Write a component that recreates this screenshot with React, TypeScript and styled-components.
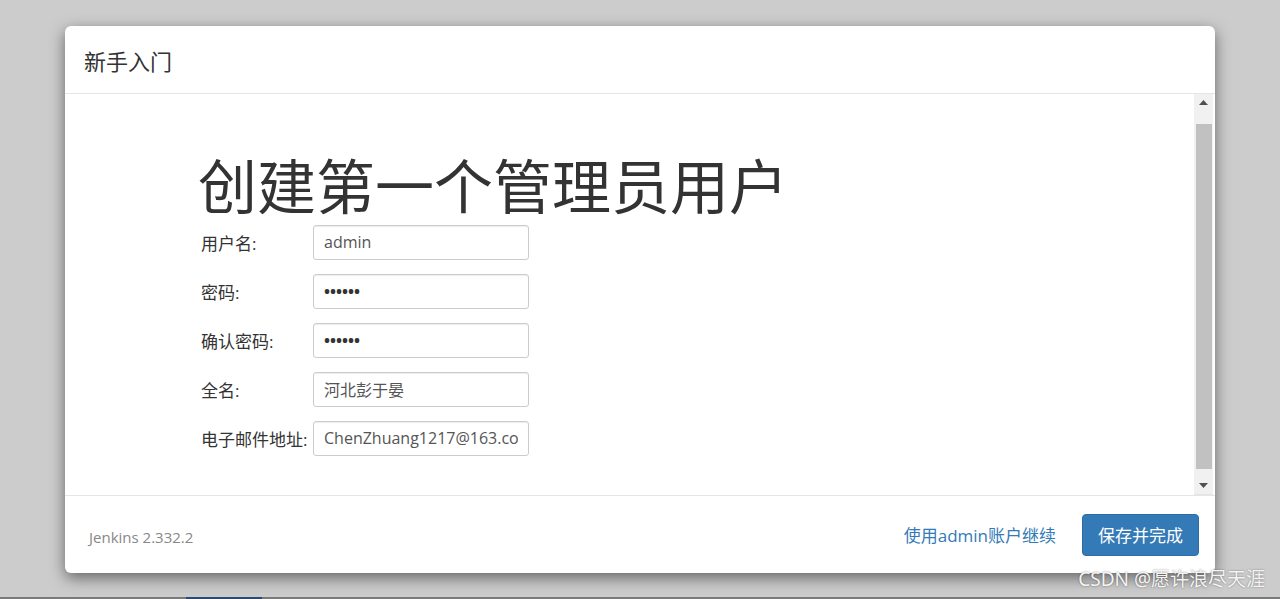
import { Fragment } from 'react';
import styled, { createGlobalStyle } from 'styled-components';

const GlobalStyle = createGlobalStyle`
  html, body {
    margin: 0;
    padding: 0;
    background: #cccccc;
  }
  * {
    box-sizing: border-box;
  }
`;

const FONT = `"Open Sans", "Noto Sans CJK SC", sans-serif`;

const Page = styled.div`
  position: relative;
  height: 599px;
  display: flex;
  flex-direction: column;
  font-family: ${FONT};
  overflow: hidden;
`;

const Stage = styled.div`
  flex: 1;
  padding-top: 26px;
`;

const Dialog = styled.div`
  width: 1150px;
  height: 547px;
  margin: 0 auto;
  background: #fff;
  border-radius: 6px;
  box-shadow: 0 5px 15px rgba(0, 0, 0, 0.5);
  display: flex;
  flex-direction: column;
  overflow: hidden;
`;

const Header = styled.div`
  height: 68px;
  flex-shrink: 0;
  display: flex;
  align-items: center;
  padding: 0 19px;
  border-bottom: 1px solid #e5e5e5;
`;

const Title = styled.h4`
  margin: 0;
  font-size: 22px;
  font-weight: 400;
  color: #333;
`;

const Body = styled.div`
  flex: 1;
  min-height: 0;
  display: flex;
  padding-right: 2px;
`;

const Content = styled.div`
  flex: 1;
  overflow: hidden;
  padding: 60px 0 0 133px;
`;

const ScrollBar = styled.div`
  width: 19px;
  display: flex;
  flex-direction: column;
  background: #f1f1f1;
  border-bottom: 1px solid #e5e5e5;
`;

const ArrowButton = styled.div`
  height: 17px;
  display: flex;
  align-items: center;
  justify-content: center;
`;

const Track = styled.div`
  flex: 1;
  display: flex;
  padding: 13px 1px 8px 2px;
`;

const Thumb = styled.div`
  flex: 1;
  background: #c1c1c1;
`;

const Heading = styled.h1`
  margin: 0 0 6px;
  font-size: 59px;
  line-height: 1.1;
  font-weight: 400;
  color: #333;
  white-space: nowrap;
`;

const Form = styled.div`
  display: grid;
  grid-template-columns: 112px 216px;
  row-gap: 14px;
  align-items: center;
  padding-left: 3px;
`;

const Label = styled.label`
  font-size: 17px;
  color: #333;
  white-space: nowrap;
`;

const Input = styled.input<{ $secret: boolean }>`
  width: 216px;
  height: 35px;
  padding: 0 10px;
  border: 1px solid #ccc;
  border-radius: 3px;
  box-shadow: inset 0 1px 1px rgba(0, 0, 0, 0.075);
  font-family: ${FONT};
  font-size: 16px;
  font-weight: ${({ $secret }) => ($secret ? 700 : 400)};
  color: ${({ $secret }) => ($secret ? '#333' : '#555')};
  outline: none;
`;

const Footer = styled.div`
  height: 78px;
  flex-shrink: 0;
  border-top: 1px solid #e5e5e5;
  display: flex;
  align-items: center;
  padding: 3px 16px 0 24px;
`;

const Version = styled.span`
  font-size: 15px;
  color: #888;
  flex: 1;
  margin-top: 2px;
`;

const LinkButton = styled.a`
  font-size: 17px;
  color: #337ab7;
  margin-right: 26px;
  cursor: pointer;
  margin-top: -4px;
`;

const PrimaryButton = styled.button`
  height: 42px;
  padding: 0 15px;
  border: 1px solid #2e6da4;
  border-radius: 4px;
  background: #337ab7;
  color: #fff;
  font-family: ${FONT};
  font-size: 17px;
  margin-top: -3px;
  cursor: pointer;
`;

const TaskStrip = styled.div`
  height: 2px;
  background: #7a7a7a;
  display: flex;
`;

const TaskItem = styled.div`
  margin-left: 186px;
  width: 76px;
  background: #2b4a6f;
`;

const Watermark = styled.div`
  position: absolute;
  right: 15px;
  bottom: 7px;
  font-size: 19px;
  color: #f4f4f4;
  text-shadow: 0 0 2px rgba(0, 0, 0, 0.45);
  font-family: "Noto Sans", "Noto Sans CJK SC", sans-serif;
`;

const Arrow = ({ up }: { up?: boolean }) => (
  <svg width="9" height="5" viewBox="0 0 9 5">
    <polygon points={up ? '0,5 4.5,0 9,5' : '0,0 9,0 4.5,5'} fill="#505050" />
  </svg>
);

const fields = [
  { label: '用户名:', value: 'admin', type: 'text' },
  { label: '密码:', value: 'secret', type: 'password' },
  { label: '确认密码:', value: 'secret', type: 'password' },
  { label: '全名:', value: '河北彭于晏', type: 'text' },
  { label: '电子邮件地址:', value: 'ChenZhuang1217@163.com', type: 'text' },
];

const App = () => {
  return (
    <Page>
      <GlobalStyle />
      <Stage>
        <Dialog>
          <Header>
            <Title>新手入门</Title>
          </Header>
          <Body>
            <Content>
              <Heading>创建第一个管理员用户</Heading>
              <Form>
                {fields.map((f) => (
                  <Fragment key={f.label}>
                    <Label>{f.label}</Label>
                    <Input
                      type={f.type}
                      defaultValue={f.value}
                      $secret={f.type === 'password'}
                      readOnly
                    />
                  </Fragment>
                ))}
              </Form>
            </Content>
            <ScrollBar>
              <ArrowButton>
                <Arrow up />
              </ArrowButton>
              <Track>
                <Thumb />
              </Track>
              <ArrowButton>
                <Arrow />
              </ArrowButton>
            </ScrollBar>
          </Body>
          <Footer>
            <Version>Jenkins 2.332.2</Version>
            <LinkButton>使用admin账户继续</LinkButton>
            <PrimaryButton>保存并完成</PrimaryButton>
          </Footer>
        </Dialog>
      </Stage>
      <TaskStrip>
        <TaskItem />
      </TaskStrip>
      <Watermark>CSDN @愿许浪尽天涯</Watermark>
    </Page>
  );
};

export default App;
